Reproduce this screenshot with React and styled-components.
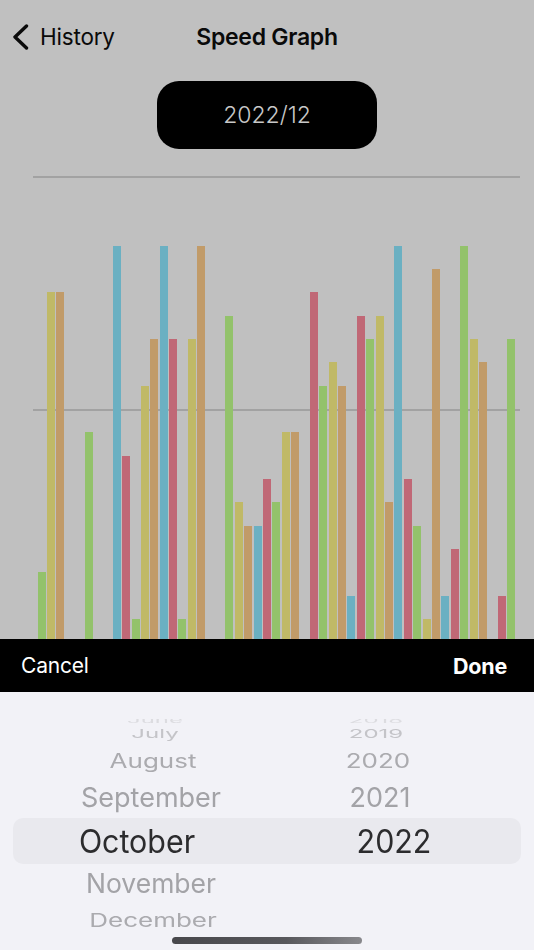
import React from "react";
import styled, { createGlobalStyle } from "styled-components";

const Global = createGlobalStyle`
  html, body { margin: 0; padding: 0; background: #c0c0c0; }
  #root { width: 534px; height: 950px; overflow: hidden; }
  * { box-sizing: border-box; }
`;

const Page = styled.div`
  width: 534px;
  height: 950px;
  display: flex;
  flex-direction: column;
  background: #c0c0c0;
  font-family: Inter, "Liberation Sans", sans-serif;
  color: #0a0a0a;
`;

const Nav = styled.header`
  flex: none;
  height: 74px;
  display: grid;
  grid-template-columns: 1fr auto 1fr;
  align-items: center;
  padding-left: 12px;
`;

const Back = styled.div`
  display: flex;
  align-items: center;
  gap: 11px;
`;

const BackLabel = styled.span`
  font-size: 22.5px;
  letter-spacing: -0.2px;
  padding-bottom: 2px;
`;

const Title = styled.h1`
  margin: 0 0 0 -12px;
  font-size: 23px;
  font-weight: 600;
  letter-spacing: -0.27px;
`;

const DateRow = styled.div`
  flex: none;
  display: flex;
  justify-content: center;
  padding-top: 7px;
`;

const DatePill = styled.div`
  width: 220px;
  height: 68px;
  display: flex;
  align-items: center;
  justify-content: center;
  background: #000;
  border-radius: 22px;
  color: #c8c8c8;
  font-size: 23px;
  font-weight: 300;
`;

const Chart = styled.section`
  position: relative;
  flex: 1;
  min-height: 0;
  display: flex;
  align-items: flex-end;
  gap: 1.4px;
  padding-left: 37.6px;
`;

const GridLine = styled.div`
  position: absolute;
  left: 33px;
  width: 487px;
  top: ${(p) => p.$top}px;
  height: 2px;
  background: #a2a2a2;
`;

const BAR_COLORS = ["#93c26b", "#c0b967", "#c19b69", "#6bb0c2", "#c06876"];

const Bar = styled.div`
  position: relative;
  flex: none;
  width: 8px;
  background: ${(p) => BAR_COLORS[p.$series]};
`;

const Toolbar = styled.div`
  flex: none;
  height: 53px;
  background: #000;
  color: #fff;
  display: flex;
  align-items: center;
  justify-content: space-between;
  padding: 0 27px 0 21px;
`;

const ToolAction = styled.span`
  font-weight: ${(p) => (p.$strong ? 700 : 400)};
  font-size: ${(p) => (p.$strong ? 21.5 : 21)}px;
  letter-spacing: -0.2px;
`;

const Picker = styled.section`
  position: relative;
  flex: none;
  height: 258px;
  background: #f2f2f7;
  padding-top: 27px;
`;

const Band = styled.div`
  position: absolute;
  left: 13px;
  right: 13px;
  top: 126px;
  height: 46px;
  border-radius: 10px;
  background: #e9e9ee;
`;

const Wheels = styled.div`
  position: relative;
  height: 219px;
  display: grid;
  grid-template-columns: 308px 142px;
  overflow: hidden;
  filter: blur(0.35px);
`;

const Wheel = styled.div`
  display: flex;
  flex-direction: column;
`;

const WheelItem = styled.div`
  flex: none;
  height: ${(p) => p.$h}px;
  display: flex;
  align-items: center;
  justify-content: center;
  white-space: nowrap;
  color: ${(p) => p.$color};
  font-size: ${(p) => p.$size}px;
  transform: translateX(${(p) => p.$x}px) scaleY(${(p) => p.$squash});
`;

const HomeBar = styled.div`
  position: absolute;
  left: 172px;
  bottom: 6px;
  width: 190px;
  height: 7px;
  border-radius: 4px;
  background: linear-gradient(90deg, #48484c, #58585c 60%, #88888c);
`;

const heights = [
  [0, 67], [1, 347], [2, 347], [3, 0], [4, 0],
  [0, 207], [1, 0], [2, 0], [3, 393], [4, 183],
  [0, 20], [1, 253], [2, 300], [3, 393], [4, 300],
  [0, 20], [1, 300], [2, 393], [3, 0], [4, 0],
  [0, 323], [1, 137], [2, 113], [3, 113], [4, 160],
  [0, 137], [1, 207], [2, 207], [3, 0], [4, 347],
  [0, 253], [1, 277], [2, 253], [3, 43], [4, 323],
  [0, 300], [1, 323], [2, 137], [3, 393], [4, 160],
  [0, 113], [1, 20], [2, 370], [3, 43], [4, 90],
  [0, 393], [1, 300], [2, 277], [3, 0], [4, 43],
  [0, 300],
];

const ROWS = [
  { h: 3, size: 24, squash: 0.32, color: "#dcdce0" },
  { h: 22, size: 24, squash: 0.5, color: "#c4c4c8" },
  { h: 32, size: 26, squash: 0.75, color: "#ababaf" },
  { h: 42, size: 27, squash: 1, color: "#a3a3a7" },
  { h: 46, size: 30.4, squash: 1.06, color: "#2c2c2e" },
  { h: 38, size: 26.5, squash: 1, color: "#a3a3a7" },
  { h: 36, size: 26, squash: 0.72, color: "#ababaf" },
];

const months = [
  ["June", 1], ["July", 1], ["August", -1], ["September", -3],
  ["October", -17], ["November", -3], ["December", -1],
];
const years = [["2018", -3], ["2019", -3], ["2020", -1], ["2021", 1], ["2022", 15]];

function renderWheel(list) {
  return list.map(([label, x], i) => (
    <WheelItem
      key={label}
      $h={ROWS[i].h}
      $size={ROWS[i].size}
      $squash={ROWS[i].squash}
      $color={ROWS[i].color}
      $x={x}
    >
      {label}
    </WheelItem>
  ));
}

export default function App() {
  return (
    <Page>
      <Global />
      <Nav>
        <Back>
          <svg width="17" height="26" viewBox="0 0 17 26" fill="none">
            <path d="M14.5 2 L3 13 L14.5 24" stroke="#0a0a0a" strokeWidth="3.4" strokeLinecap="round" strokeLinejoin="round" />
          </svg>
          <BackLabel>History</BackLabel>
        </Back>
        <Title>Speed Graph</Title>
        <span />
      </Nav>
      <DateRow>
        <DatePill>2022/12</DatePill>
      </DateRow>
      <Chart>
        <GridLine $top={26.5} />
        <GridLine $top={259.5} />
        {heights.map(([series, h], i) => (
          <Bar key={i} $series={series} style={{ height: h }} />
        ))}
      </Chart>
      <Toolbar>
        <ToolAction>Cancel</ToolAction>
        <ToolAction $strong>Done</ToolAction>
      </Toolbar>
      <Picker>
        <Band />
        <Wheels>
          <Wheel>{renderWheel(months)}</Wheel>
          <Wheel>{renderWheel(years)}</Wheel>
        </Wheels>
        <HomeBar />
      </Picker>
    </Page>
  );
}
